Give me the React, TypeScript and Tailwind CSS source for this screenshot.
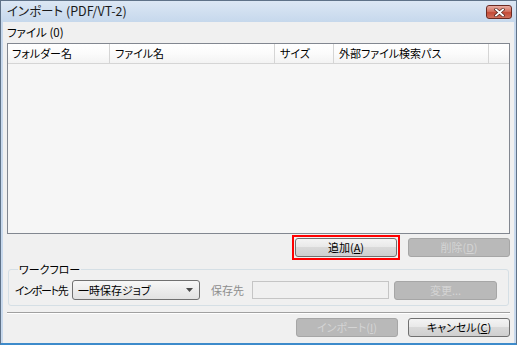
import React from "react";

const font = "font-['Noto_Sans_CJK_JP','Noto_Sans',sans-serif] [font-feature-settings:'palt']";

function Btn({ label, disabled, focus, w = "w-[102px]" }: { label: React.ReactNode; disabled?: boolean; focus?: boolean; w?: string }) {
  const inner = (
    <div
      className={
        "h-[19px] rounded-[3px] border flex items-center justify-center text-[11px] leading-none " +
        w +
        " " +
        (disabled
          ? "border-[#a6a6a6] bg-[#b9b9b9] text-[#d4d4d4]"
          : "border-[#707070] bg-[linear-gradient(#f4f4f4,#e9e9e9_45%,#d9d9d9_50%,#cfcfcf)] text-black")
      }
    >
      {label}
    </div>
  );
  if (focus) {
    return <div className="border-2 border-[#ff0000] p-[1px]">{inner}</div>;
  }
  return inner;
}

export default function App() {
  return (
    <div className={"w-[517px] h-[345px] flex flex-col bg-[#c8d9ed] border border-[#5f7288] border-b-[2px] border-b-[#3d8bcb] " + font}>
      {/* title bar */}
      <div className="h-[21px] flex items-center justify-between pl-[6px] pr-[4px] bg-[linear-gradient(#dce7f4,#c6d8ec)]">
        <span className="text-[12.5px] text-[#1a1a1a] leading-none">インポート (PDF/VT-2)</span>
        <div className="w-[26px] h-[14px] mt-[1px] rounded-[3px] border border-[#6b2a22] bg-[linear-gradient(#e9ada3,#d3715f_45%,#c44a36_55%,#d0705c)] flex items-center justify-center">
          <svg width="11" height="9" viewBox="0 0 11 9">
            <path d="M2 1.5 L9 7.5 M9 1.5 L2 7.5" stroke="#5a2a22" strokeWidth="3.2" strokeLinecap="square" />
            <path d="M2 1.5 L9 7.5 M9 1.5 L2 7.5" stroke="#ffffff" strokeWidth="1.8" strokeLinecap="square" />
          </svg>
        </div>
      </div>
      {/* client */}
      <div className="flex-1 mx-[2px] bg-[#f0f0f0] flex flex-col pl-[4px] pr-[4px] text-black">
        <div className="h-[21px] flex items-center text-[11.5px] leading-none">ファイル (0)</div>
        {/* list */}
        <div className="h-[191px] border border-[#828790] bg-[#f6f6f6] flex flex-col">
          <div className="h-[20px] flex bg-[linear-gradient(#ffffff,#fbfbfb_50%,#f3f3f3)] border-b border-[#d5d5d5] text-[11px] leading-none">
            <div className="w-[102px] border-r border-[#d5d5d5] flex items-center pl-[4px]">フォルダー名</div>
            <div className="w-[165px] border-r border-[#d5d5d5] flex items-center pl-[5px]">ファイル名</div>
            <div className="w-[59px] border-r border-[#d5d5d5] flex items-center pl-[5px]">サイズ</div>
            <div className="w-[155px] border-r border-[#d5d5d5] flex items-center pl-[5px]">外部ファイル検索パス</div>
            <div className="flex-1" />
          </div>
          <div className="flex-1" />
        </div>
        {/* add / delete */}
        <div className="h-[25px] mt-[1px] flex items-center justify-end gap-[8px]">
          <Btn label={<span>追加(<u>A</u>)</span>} focus />
          <Btn label={<span>削除(<u>D</u>)</span>} disabled />
        </div>
        {/* group */}
        <fieldset className="mt-[2px] mx-[1px] border border-[#d5dfe5] rounded-[3px] pl-[6px] pr-[10px] pb-[5px]">
          <legend className="ml-[3px] px-[1px] text-[11px] leading-[14px]">ワークフロー</legend>
          <div className="flex items-center h-[20px] mt-[4px] text-[11px] leading-none">
            <span className="w-[57px] shrink-0 whitespace-nowrap tracking-[-1.3px]">インポート先</span>
            <div className="w-[128px] shrink-0 h-[20px] rounded-[3px] border border-[#707070] bg-[linear-gradient(#f7f7f7,#ececec_50%,#e2e2e2)] flex items-center pl-[5px] pr-[6px] justify-between">
              <span className="whitespace-nowrap">一時保存ジョブ</span>
              <svg width="7" height="4" viewBox="0 0 7 4">
                <path d="M0 0 L7 0 L3.5 4 Z" fill="#4a4a4a" />
              </svg>
            </div>
            <span className="ml-[11px] w-[41px] shrink-0 whitespace-nowrap text-[#8d8d8d]">保存先</span>
            <div className="w-[137px] shrink-0 h-[18px] border border-[#c5c5c5] bg-[#f0f0f0]" />
            <div className="ml-[5px]">
              <Btn label="変更..." disabled w="w-[103px]" />
            </div>
          </div>
        </fieldset>
        {/* separator */}
        <div className="mt-[6px] h-[2px] border-t border-[#a0a0a0] border-b border-b-[#ffffff]" />
        {/* bottom buttons */}
        <div className="h-[23px] mt-[2px] flex items-center justify-end gap-[10px]">
          <Btn label={<span>インポート(<u>I</u>)</span>} disabled />
          <Btn label={<span>キャンセル(<u>C</u>)</span>} />
        </div>
      </div>
    </div>
  );
}
